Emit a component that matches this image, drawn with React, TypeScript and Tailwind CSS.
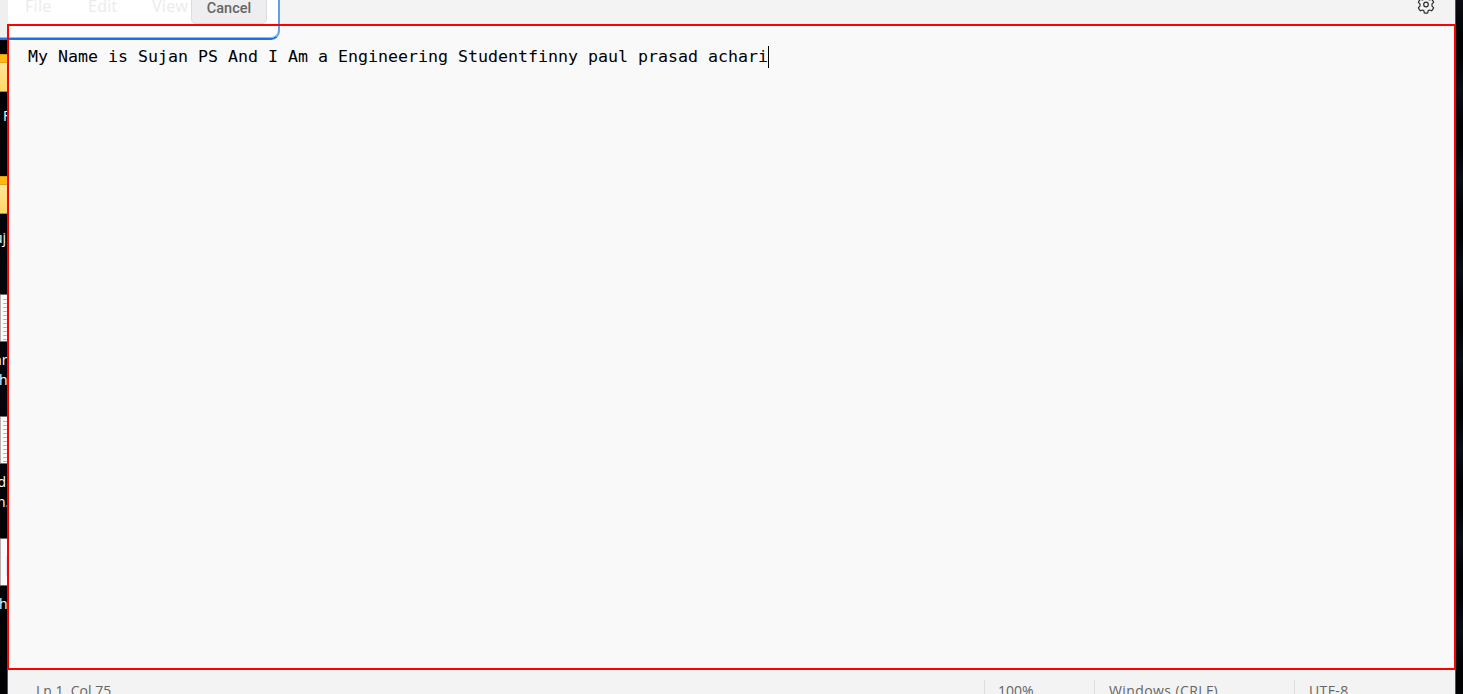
import type { ReactNode } from "react";

function Label({ className, children }: { className: string; children: ReactNode }) {
  return (
    <span className={`absolute whitespace-pre text-[14px] leading-5 text-white ${className}`}>{children}</span>
  );
}

function Folder({ className }: { className: string }) {
  return (
    <div
      className={`absolute left-0 h-[38px] w-2 border-t border-b border-t-[#dc9c12] border-b-[#b98b22] bg-linear-to-b from-[#ffe9a3] to-[#ffd866] ${className}`}
    >
      <div className="h-2 border-b border-[#e5a31c] bg-[#fdb813]" />
    </div>
  );
}

function Doc({ className, lines = true }: { className: string; lines?: boolean }) {
  return (
    <div className={`absolute left-0 h-[48px] w-2 border-y border-[#6d6d6d] bg-[#fafafa] ${className}`}>
      <div className="h-full w-px bg-[#b5b5b5]" />
      {lines ? (
        <div className="absolute top-1 left-[3px] flex flex-col gap-[3px]">
          {Array.from({ length: 11 }, (_, i) => (
            <div key={i} className="h-px w-[5px] bg-[#b8b8b8]" />
          ))}
        </div>
      ) : (
        <div className="absolute top-[17px] left-[6px] h-5 w-px bg-[#dceaf5]" />
      )}
    </div>
  );
}

function Gear() {
  return (
    <svg className="absolute top-[-4px] left-[1410px]" width="18" height="18" viewBox="0 0 18 18" fill="none" stroke="#2b2b2b" strokeWidth="1.2" strokeLinejoin="round">
      <path d="M7.3 1 Q9 .6 10.7 1 L11.1 3.2 L12.5 4 L14.6 3.2 Q15.9 4.5 16.6 6.3 L15 7.9 V10.1 L16.6 11.7 Q15.9 13.5 14.6 14.8 L12.5 14 L11.1 14.8 L10.7 17 Q9 17.4 7.3 17 L6.9 14.8 L5.5 14 L3.4 14.8 Q2.1 13.5 1.4 11.7 L3 10.1 V7.9 L1.4 6.3 Q2.1 4.5 3.4 3.2 L5.5 4 L6.9 3.2 Z" />
      <circle cx="9" cy="8.5" r="2.3" />
    </svg>
  );
}

export default function App() {
  return (
    <div className="relative flex h-[694px] w-[1463px] overflow-hidden bg-[#010103] font-['Open_Sans','Noto_Sans',sans-serif]">
      <aside className="relative w-[7px] shrink-0 overflow-hidden bg-linear-to-b from-[#010103] via-[#05060c] to-[#010103]">
        <Folder className="top-[54px]" />
        <Label className="top-[106px] left-[3px]">F</Label>
        <Folder className="top-[176px]" />
        <Label className="top-[228px] right-[1px]">uj</Label>
        <Doc className="top-[294px]" />
        <Label className="top-[350px] left-[-6px]">ar</Label>
        <Label className="top-[370px] left-[-1px]">h</Label>
        <Doc className="top-[416px]" />
        <Label className="top-[472px] right-[1px]">d</Label>
        <Label className="top-[492px] left-[-3px]">n.</Label>
        <Doc className="top-[538px]" lines={false} />
        <Label className="top-[594px] left-[-1px]">h</Label>
      </aside>

      <main className="flex w-[1449px] shrink-0 flex-col">
        <header className="relative h-6 w-full shrink-0 border-r border-[#8a2aa0] bg-[#f3f3f3]">
          <Gear />
        </header>
        <section className="h-[646px] w-[1449px] shrink-0 border-2 border-[#fe0000] bg-[#f9f9f9] pt-[20px] pl-[19px]">
          <div className="flex h-[21px] items-center">
            <span className="whitespace-pre font-['DejaVu_Sans_Mono',monospace] text-[16.61px] leading-[21px] text-black">
              My Name is Sujan PS And I Am a Engineering Studentfinny paul prasad achari
            </span>
            <span className="h-[22px] w-px bg-black" />
          </div>
        </section>
        <footer className="flex h-6 w-full shrink-0 items-start overflow-hidden border-x border-[#8a2aa0] bg-[#f3f3f3] pt-2.5 text-[14px] leading-[22px] text-[#656565]">
          <span className="w-[976px] shrink-0 pl-[28px]">Ln 1, Col 75</span>
          <span className="h-5 w-[110px] shrink-0 border-l border-[#dedede] pl-[13px]">100%</span>
          <span className="h-5 w-[200px] shrink-0 border-l border-[#dedede] pl-[14px] tracking-[0.4px]">Windows (CRLF)</span>
          <span className="h-5 border-l border-[#dedede] pl-[14px] tracking-[0.4px]">UTF-8</span>
        </footer>
      </main>

      <aside className="w-[7px] shrink-0 bg-[repeating-linear-gradient(to_bottom,#0a0d14_0px,#010102_35px,#010102_55px,#0a0d14_90px)]" />

      <div className="absolute top-0 left-0 h-10 w-2 bg-[#efefef]">
        <div className="absolute bottom-0 h-[3px] w-full border-t border-[#8ab8f2] bg-[#1a73e8]" />
      </div>
      <div className="absolute top-0 left-2 flex h-10 w-[272px] overflow-hidden rounded-br-[9px] border-r-2 border-b-2 border-r-[#62a0ec] border-b-[#1a73e8] bg-white shadow-[inset_0_-1px_0_#8ab8f2]">
        <div className="flex w-[183px] shrink-0 text-[16px] leading-6 text-[#ebebeb]">
          <span className="mt-[-6px] w-[63px] shrink-0 pl-[17px] tracking-[0.3px]">File</span>
          <span className="mt-[-6px] w-[65px] shrink-0 pl-[17px] tracking-[0.3px]">Edit</span>
          <span className="mt-[-6px] pl-[16px] tracking-[0.3px]">View</span>
        </div>
        <div className="mt-[-8px] flex h-8 w-[76px] shrink-0 items-end justify-center rounded-[5px] border border-[#dcdcde] bg-[#eeeef0] pb-[4px] font-[Roboto,sans-serif] text-[14.5px] leading-5 font-medium text-[#666666]">
          Cancel
        </div>
      </div>
      <div className="absolute top-6 left-[7px] h-0.5 w-[280px] bg-[#fe0000]" />
      <div className="absolute top-6 left-[7px] h-5 w-0.5 bg-[#fe0000]" />
    </div>
  );
}
